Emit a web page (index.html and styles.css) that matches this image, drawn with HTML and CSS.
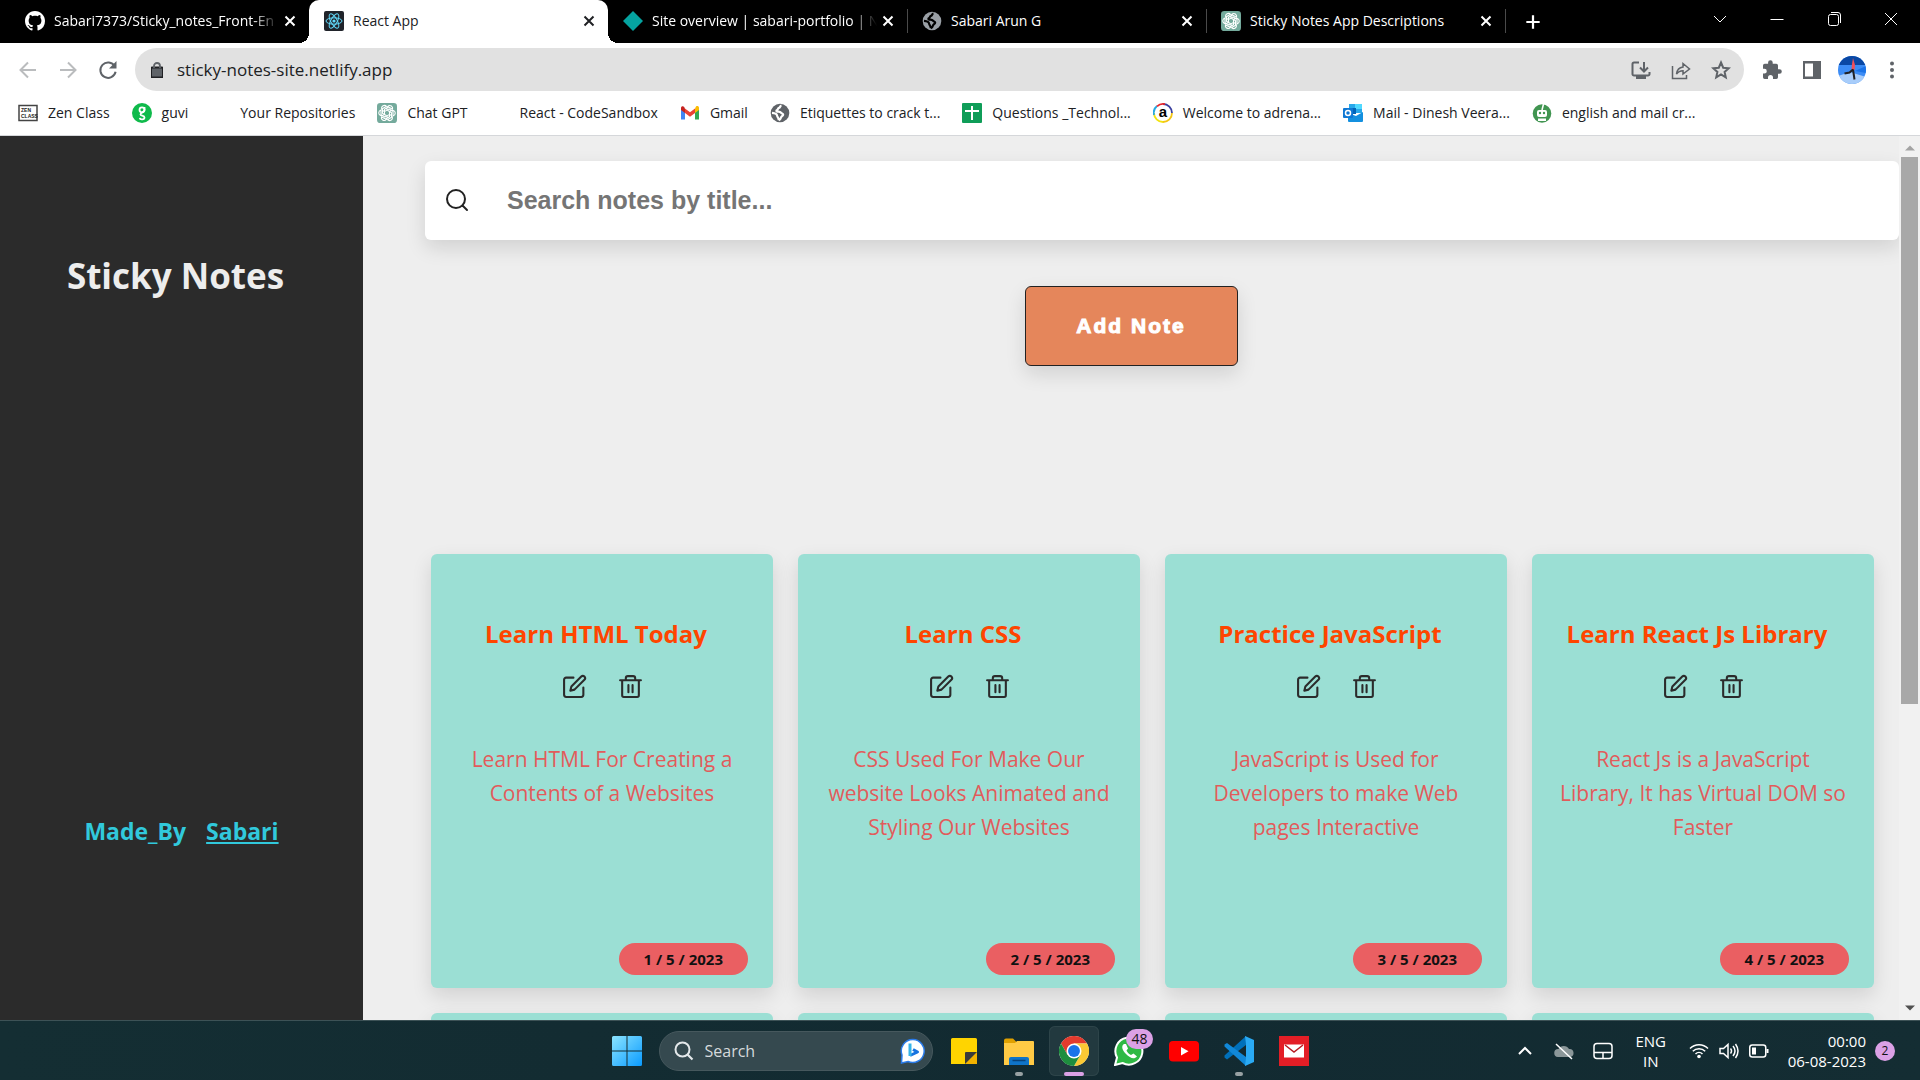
FILE: index.html
```html
<!DOCTYPE html>
<html lang="en">
<head>
<meta charset="utf-8">
<title>React App</title>
<link rel="stylesheet" href="styles.css">
</head>
<body>
<svg class="sprite" aria-hidden="true">
  <symbol id="close" viewBox="0 0 20 20"><path d="M5.500 5.500l9 9M14.500 5.500l-9 9" fill="none" stroke="currentColor" stroke-width="2"/></symbol>
  <symbol id="gpt" viewBox="0 0 24 24"><rect width="24" height="24" rx="4" fill="#74aa9c"/><g fill="none" stroke="#fff" stroke-width="1.300" stroke-linejoin="round"><g id="petal"><path d="M12 8.600V5.800a3.400 3.400 0 0 1 5.200-2.200c1.400.9 1.900 2.400 1.500 3.900l-5-2.800L9 7.400v5.900"/></g><use href="#petal" transform="rotate(60 12 12)"/><use href="#petal" transform="rotate(120 12 12)"/><use href="#petal" transform="rotate(180 12 12)"/><use href="#petal" transform="rotate(240 12 12)"/><use href="#petal" transform="rotate(300 12 12)"/></g></symbol>
  <symbol id="globe" viewBox="0 0 20 20"><circle cx="10" cy="10" r="9.300" fill="currentColor"/><path d="M11.500 2.600c-1.800.2-1 1.900-2.500 2.200-1.300.4-.7 1.700-1.900 2.100-1 .4-1 1.700.2 1.800 1.900 0 2.900-.3 3.700 1 .6 1 2.300.5 2.200 2-.2 1.500-1.900 1.500-2.300 3-.3 1.200-1 2.200-2.100 2.500M2 9.800c2.300.2 4.900.7 5 2.700.1 1.300 1.500 1.500 1.800 4.700" fill="none" stroke="var(--land)" stroke-width="2.200"/></symbol>
  <symbol id="edit" viewBox="0 0 24 24"><path d="M11 3.500H4a2 2 0 0 0-2 2V20a2 2 0 0 0 2 2h14.500a2 2 0 0 0 2-2v-7M18.500 2.500a2.100 2.100 0 0 1 3 3L12 15l-4 1 1-4z" fill="none" stroke="currentColor" stroke-width="2" stroke-linecap="round" stroke-linejoin="round"/></symbol>
  <symbol id="trash" viewBox="0 0 24 24"><path d="M2 6h20M4 6v14.500A1.500 1.500 0 0 0 5.500 22h13a1.500 1.500 0 0 0 1.500-1.500V6M7.500 6V4A2 2 0 0 1 9.500 2h5a2 2 0 0 1 2 2v2M10 10.500v7M14 10.500v7" fill="none" stroke="currentColor" stroke-width="2" stroke-linecap="round" stroke-linejoin="round"/></symbol>
</svg>

<header class="browser">
  <div class="tabstrip">
    <div class="tab">
      <svg class="fav" viewBox="0 0 16 16"><path fill="#fff" d="M8 0C3.580 0 0 3.580 0 8c0 3.540 2.290 6.530 5.470 7.590.4.070.55-.17.55-.38 0-.19-.01-.82-.01-1.490-2.010.37-2.530-.49-2.690-.94-.09-.23-.48-.94-.82-1.130-.28-.15-.68-.52-.01-.53.63-.01 1.080.58 1.230.82.720 1.210 1.870.87 2.330.66.070-.52.28-.87.51-1.070-1.780-.2-3.640-.89-3.640-3.950 0-.87.31-1.590.82-2.150-.08-.2-.36-1.020.08-2.120 0 0 .67-.21 2.200.82.640-.18 1.320-.27 2-.27s1.360.09 2 .27c1.530-1.040 2.200-.82 2.200-.82.44 1.100.16 1.920.08 2.120.51.560.82 1.270.82 2.150 0 3.070-1.870 3.750-3.650 3.950.29.25.54.73.54 1.480 0 1.070-.01 1.930-.01 2.200 0 .21.150.46.550.38A8.010 8.010 0 0 0 16 8c0-4.420-3.580-8-8-8z"/></svg>
      <span class="tab-title fade">Sabari7373/Sticky_notes_Front-En</span>
      <button class="tab-close" aria-label="Close tab"><svg><use href="#close"/></svg></button>
    </div>
    <div class="tab active">
      <svg class="fav" viewBox="0 0 20 20"><rect width="20" height="20" rx="2" fill="#20232a"/><g fill="none" stroke="#61dafb" stroke-width="1"><ellipse cx="10" cy="10" rx="8" ry="3.200"/><ellipse cx="10" cy="10" rx="8" ry="3.200" transform="rotate(60 10 10)"/><ellipse cx="10" cy="10" rx="8" ry="3.200" transform="rotate(120 10 10)"/></g><circle cx="10" cy="10" r="1.600" fill="#61dafb"/></svg>
      <span class="tab-title">React App</span>
      <button class="tab-close" aria-label="Close tab"><svg><use href="#close"/></svg></button>
    </div>
    <div class="tab">
      <svg class="fav" viewBox="0 0 20 20"><path d="M10 0l10 10-10 10L0 10z" fill="#05a3a0"/></svg>
      <span class="tab-title fade">Site overview | sabari-portfolio | N</span>
      <button class="tab-close" aria-label="Close tab"><svg><use href="#close"/></svg></button>
    </div>
    <div class="tab ruled">
      <svg class="fav globe-dark"><use href="#globe"/></svg>
      <span class="tab-title">Sabari Arun G</span>
      <button class="tab-close" aria-label="Close tab"><svg><use href="#close"/></svg></button>
    </div>
    <div class="tab ruled">
      <svg class="fav"><use href="#gpt"/></svg>
      <span class="tab-title">Sticky Notes App Descriptions</span>
      <button class="tab-close" aria-label="Close tab"><svg><use href="#close"/></svg></button>
    </div>
    <button class="new-tab" aria-label="New tab"><svg viewBox="0 0 18 18"><path d="M9 1.500v15M1.500 9h15" stroke="#fff" stroke-width="2.500"/></svg></button>
    <div class="window-controls">
      <button aria-label="Search tabs"><svg viewBox="0 0 16 16"><path d="M2 5l6 6 6-6"/></svg></button>
      <button aria-label="Minimize"><svg viewBox="0 0 16 16"><path d="M1.500 8.500h13"/></svg></button>
      <button aria-label="Restore"><svg viewBox="0 0 16 16"><rect x="2.500" y="3.500" width="10" height="11" rx="2"/><path d="M5 1.500h7a2.500 2.500 0 0 1 2.500 2.500v8"/></svg></button>
      <button aria-label="Close"><svg viewBox="0 0 16 16"><path d="M2 2l12 12M14 2L2 14"/></svg></button>
    </div>
  </div>

  <div class="toolbar">
    <button class="nav-btn dim" aria-label="Back"><svg viewBox="0 0 20 20"><path d="M18 10H3M10 2.500L2.500 10l7.500 7.500"/></svg></button>
    <button class="nav-btn dim" aria-label="Forward"><svg viewBox="0 0 20 20"><path d="M2 10h15M10 2.500l7.500 7.500-7.500 7.500"/></svg></button>
    <button class="nav-btn" aria-label="Reload"><svg viewBox="0 0 20 20"><path d="M16.700 6.200A7.700 7.700 0 1 0 17.600 11.800"/><path d="M18.500 1v7.500H11z" fill="currentColor" stroke="none"/></svg></button>
    <div class="omnibox">
      <svg class="lock" viewBox="0 0 12 16"><rect x="0" y="5.500" width="12" height="10" rx="1.500" fill="#5f6368"/><path d="M3 6V4a3 3 0 0 1 6 0v2" fill="none" stroke="#5f6368" stroke-width="1.800"/></svg>
      <input class="url" type="text" value="sticky-notes-site.netlify.app" aria-label="Address">
      <button aria-label="Install app"><svg viewBox="0 0 20 20"><path d="M8 2.500H3A1.500 1.500 0 0 0 1.500 4v10A1.500 1.500 0 0 0 3 15.500h14a1.500 1.500 0 0 0 1.500-1.500v-2M13 2v9M9 7.500l4 4 4-4"/><path d="M5 15h10v4H5z" fill="currentColor" stroke="none"/></svg></button>
      <button aria-label="Share"><svg viewBox="0 0 20 20"><path d="M1.500 6v12.500h14V15M5.500 14c.5-4.500 3-6.500 6.500-7V3.500l6.500 5.500-6.500 5v-3.300c-2.800 0-4.800.8-6.500 3.300z" stroke-width="1.500"/></svg></button>
      <button aria-label="Bookmark this tab"><svg viewBox="0 0 20 20"><path d="M10 2.500l2.200 5.200 5.600.5-4.200 3.700 1.200 5.500-4.800-2.900-4.800 2.900 1.200-5.500-4.200-3.700 5.600-.5z"/></svg></button>
    </div>
    <div class="extensions">
      <button aria-label="Extensions"><svg viewBox="0 0 20 20"><path d="M17.500 9.200H16V5.500a1.700 1.700 0 0 0-1.700-1.700h-3.600V2.500a2.300 2.300 0 0 0-4.600 0v1.300H2.700A1.700 1.700 0 0 0 1 5.500v3.300h1.400a2.400 2.400 0 0 1 0 4.800H1v3.700A1.700 1.700 0 0 0 2.700 19H6v-1.400a2.500 2.500 0 0 1 5 0V19h3.300a1.700 1.700 0 0 0 1.700-1.700v-3.500h1.500a2.300 2.300 0 0 0 0-4.600z" fill="#5f6368" stroke="none"/></svg></button>
      <button aria-label="Side panel"><svg viewBox="0 0 20 20"><path d="M1 1h18v18H1zM3 3.500v13h8v-13z" fill="#5f6368" fill-rule="evenodd" stroke="none"/></svg></button>
      <button aria-label="Profile"><svg class="avatar" viewBox="0 0 28 28"><clipPath id="round"><circle cx="14" cy="14" r="14"/></clipPath><g clip-path="url(#round)" stroke="none"><path d="M0 0h28v28H0z" fill="#3c8cf5"/><path d="M0 0h28v9H0z" fill="#0a48a4"/><path d="M0 20l12-4 16 5v10H0z" fill="#a8cdfa"/><path d="M17 15l11-5v7z" fill="#1a73e8"/><path d="M15 2l2 7-.5 5h-3l.5-6z" fill="#f0505a"/></g><path d="M15 13.500l1.500 10M15 13.500l-3.500 3-5 1" stroke="#202124" stroke-width="2"/></svg></button>
      <button aria-label="Menu"><svg viewBox="0 0 20 20"><g fill="#5f6368" stroke="none"><circle cx="10" cy="3.500" r="2"/><circle cx="10" cy="10" r="2"/><circle cx="10" cy="16.500" r="2"/></g></svg></button>
    </div>
  </div>

  <nav class="bookmarks">
    <a href="#"><svg viewBox="0 0 20 20"><rect x="1" y="2.500" width="18" height="15" fill="#fff" stroke="#444" stroke-width="1.500"/><text x="3" y="9" class="zen">ZEN</text><text x="3" y="15" class="zen">CLASS</text></svg>Zen Class</a>
    <a href="#"><svg viewBox="0 0 20 20"><circle cx="10" cy="10" r="10" fill="#0fba4b"/><g fill="none" stroke="#fff" stroke-width="1.800"><circle cx="10" cy="6.800" r="2.500"/><path d="M12.500 4v3c0 2-4 2.500-4 4.500 0 1.500 4 .8 4 3s-4.500 2.500-4.800.3"/></g></svg>guvi</a>
    <a href="#"><svg></svg>Your Repositories</a>
    <a href="#"><svg><use href="#gpt"/></svg>Chat GPT</a>
    <a href="#"><svg></svg>React - CodeSandbox</a>
    <a href="#"><svg viewBox="0 0 20 20"><path d="M1 5v11.500h4V9z" fill="#4285f4"/><path d="M15 9v7.500h4V5z" fill="#34a853"/><path d="M15 5.500V10l4-3V5c0-2-2-2.300-3-1.500z" fill="#fbbc04"/><path d="M5 5.500l5 3.800 5-3.800V10l-5 3.800L5 10z" fill="#ea4335"/><path d="M1 5v2l4 3V5.500L4 3.700C3 2.700 1 3 1 5z" fill="#c5221f"/></svg>Gmail</a>
    <a href="#"><svg class="globe-light"><use href="#globe"/></svg>Etiquettes to crack t...</a>
    <a href="#"><svg viewBox="0 0 20 20"><rect width="20" height="20" rx="1" fill="#0f9d58"/><path d="M10 3v14M3 8h14" stroke="#fff" stroke-width="2"/></svg>Questions _Technol...</a>
    <a href="#"><svg viewBox="0 0 20 20"><g fill="none" stroke-width="1.800"><path d="M10 1a9 9 0 0 1 9 9" stroke="#3a3f9e"/><path d="M19 10a9 9 0 0 1-9 9" stroke="#f3c514"/><path d="M10 19a9 9 0 0 1-9-9" stroke="#f2e30c"/><path d="M1 12a9 9 0 0 1 3-9" stroke="#27a8e0"/><path d="M4 3.400A9 9 0 0 1 12 1.200" stroke="#e6262b"/></g><text x="10" y="14" class="brand-a">a</text></svg>Welcome to adrena...</a>
    <a href="#"><svg viewBox="0 0 20 20"><path d="M6 1h13v9H6z" fill="#28a8ea"/><path d="M12 1h7v5h-7z" fill="#50d9ff"/><path d="M6 5h7v6H6z" fill="#0364b8"/><path d="M5 10l8 3 7-4v9a1 1 0 0 1-1 1H6a1 1 0 0 1-1-1z" fill="#1490df"/><rect y="5" width="10" height="10" rx="1" fill="#0f78d4"/><circle cx="5" cy="10" r="2.500" fill="none" stroke="#fff" stroke-width="1.500"/></svg>Mail - Dinesh Veera...</a>
    <a href="#"><svg viewBox="0 0 20 20"><circle cx="10" cy="10.500" r="9.300" fill="#419551"/><path d="M10 7l1.500-6" stroke="#fff" stroke-width="1.500"/><rect x="5" y="7" width="10" height="7" rx="2" fill="#fff"/><circle cx="8" cy="10" r="1.200" fill="#419551"/><circle cx="12" cy="10" r="1.200" fill="#419551"/><path d="M6 15.500h8v2.500H6z" fill="#fff"/></svg>english and mail cr...</a>
  </nav>
</header>

<div class="page">
  <aside class="sidebar">
    <h1>Sticky Notes</h1>
    <p class="credit"><span>Made_By</span><a href="#">Sabari</a></p>
  </aside>
  <main>
    <div class="search">
      <svg viewBox="0 0 24 24"><circle cx="11" cy="10" r="9"/><path d="M17.500 16.500L22 21"/></svg>
      <input type="search" placeholder="Search notes by title..." aria-label="Search notes by title">
    </div>
    <button class="add-note">Add Note</button>
    <section class="notes">
      <article class="note">
        <h2>Learn HTML Today</h2>
        <div class="actions"><button aria-label="Edit"><svg><use href="#edit"/></svg></button><button aria-label="Delete"><svg><use href="#trash"/></svg></button></div>
        <p>Learn HTML For Creating a Contents of a Websites</p>
        <time>1 / 5 / 2023</time>
      </article>
      <article class="note">
        <h2>Learn CSS</h2>
        <div class="actions"><button aria-label="Edit"><svg><use href="#edit"/></svg></button><button aria-label="Delete"><svg><use href="#trash"/></svg></button></div>
        <p>CSS Used For Make Our website Looks Animated and Styling Our Websites</p>
        <time>2 / 5 / 2023</time>
      </article>
      <article class="note">
        <h2>Practice JavaScript</h2>
        <div class="actions"><button aria-label="Edit"><svg><use href="#edit"/></svg></button><button aria-label="Delete"><svg><use href="#trash"/></svg></button></div>
        <p>JavaScript is Used for Developers to make Web pages Interactive</p>
        <time>3 / 5 / 2023</time>
      </article>
      <article class="note">
        <h2>Learn React Js Library</h2>
        <div class="actions"><button aria-label="Edit"><svg><use href="#edit"/></svg></button><button aria-label="Delete"><svg><use href="#trash"/></svg></button></div>
        <p>React Js is a JavaScript Library, It has Virtual DOM so Faster</p>
        <time>4 / 5 / 2023</time>
      </article>
      <article class="note"></article>
      <article class="note"></article>
      <article class="note"></article>
      <article class="note"></article>
    </section>
  </main>
  <div class="scrollbar">
    <svg class="spent" viewBox="0 0 10 6"><path d="M0 5.500L5 .5l5 5z"/></svg>
    <div class="track"><div class="thumb"></div></div>
    <svg viewBox="0 0 10 6"><path d="M0 .5l5 5 5-5z"/></svg>
  </div>
</div>

<footer class="taskbar">
  <div class="apps">
    <button class="app" aria-label="Start"><svg viewBox="0 0 30 30"><linearGradient id="win" x1="0" y1="0" x2="1" y2="1"><stop offset="0" stop-color="#8be4ff"/><stop offset="1" stop-color="#0a9bff"/></linearGradient><path d="M0 1.500A1.500 1.500 0 0 1 1.500 0h13v14.500H0zM15.500 0h13A1.500 1.500 0 0 1 30 1.500v13H15.500zM0 15.500h14.500V30h-13A1.500 1.500 0 0 1 0 28.500zM15.500 15.500H30v13a1.500 1.500 0 0 1-1.500 1.500h-13z" fill="url(#win)"/></svg></button>
    <label class="task-search">
      <svg viewBox="0 0 20 20"><circle cx="8.500" cy="8.500" r="7" fill="none" stroke="#e4e8ea" stroke-width="2"/><path d="M13.500 13.500l5 5" stroke="#e4e8ea" stroke-width="2.200"/></svg>
      <input type="text" placeholder="Search">
      <svg class="bing" viewBox="0 0 26 26"><path d="M13 1.500A11.500 11.500 0 1 1 8 23.500L1.500 25 2 17A11.500 11.500 0 0 1 13 1.500z" fill="#fff" stroke="#2a7bea" stroke-width="1.500"/><path d="M10 17.500l7.500-3.500-4.500-2.500" fill="none" stroke="#1673e0" stroke-width="3" stroke-linejoin="round"/><path d="M10 5.500v12.500" stroke="#35b3e8" stroke-width="3"/></svg>
    </label>
    <button class="app" aria-label="Sticky Notes"><svg viewBox="0 0 30 30"><path d="M2 3.500A1.500 1.500 0 0 1 3.500 2h23A1.500 1.500 0 0 1 28 3.500V28H2z" fill="#ffd400"/><path d="M28 16L16 28h12z" fill="#f2b200"/><path d="M28 16H17a1 1 0 0 0-1 1v11z" fill="#3a3a3a"/></svg></button>
    <button class="app open" aria-label="File Explorer"><svg viewBox="0 0 30 30"><path d="M0 4.500A2 2 0 0 1 2 2.500h7L12 5.500v5H0z" fill="#e0a000"/><path d="M0 7h11l2-2h16a1 1 0 0 1 1 1v23H0z" fill="#ffca45"/><path d="M5 29v-6a2 2 0 0 1 2-2h16a2 2 0 0 1 2 2v6z" fill="#0f74c8"/><path d="M8.500 24.500h13" stroke="#07427a" stroke-width="1.500"/></svg></button>
    <button class="app open current" aria-label="Chrome"><svg viewBox="0 0 48 48"><circle cx="24" cy="24" r="24" fill="#fff"/><path d="M24 12h20.800A24 24 0 0 0 3.200 12l10.400 18z" fill="#e33b2e"/><path d="M34.400 30L24 48A24 24 0 0 0 44.800 12H24z" fill="#fcc934"/><path d="M13.600 30L3.200 12A24 24 0 0 0 24 48l10.400-18z" fill="#1e8e3e"/><circle cx="24" cy="24" r="12" fill="#fff"/><circle cx="24" cy="24" r="9.500" fill="#1a73e8"/></svg></button>
    <button class="app" aria-label="WhatsApp, 48 unread"><svg viewBox="0 0 30 30"><path d="M1 29l2-7.500A13.500 13.500 0 1 1 8.500 27z" fill="#2fb944" stroke="#fff" stroke-width="2"/><path d="M10 8c-3 2-2 6 2 10s8 6 11 2.500l-3.500-3-2.500 1.500c-2-1-3.500-2.500-4.500-4.500L14 12.500 12 8z" fill="#fff"/></svg><span class="count">48</span></button>
    <button class="app" aria-label="YouTube"><svg viewBox="0 0 30 30"><rect y="5" width="30" height="20.500" rx="4" fill="#f00"/><path d="M12 11l7.500 4.300L12 19.500z" fill="#fff"/></svg></button>
    <button class="app open" aria-label="Visual Studio Code"><svg viewBox="0 0 30 30"><path d="M22 0L.5 19.500v2L3 23.500 22 9z" fill="#0070ba"/><path d="M22 30L.5 10.500v-2L3 7l19 14z" fill="#1188d8"/><path d="M21 0l1 8v14l-1 8 9-4V4z" fill="#2aaaf4"/></svg></button>
    <button class="app" aria-label="Mail notifier"><svg viewBox="0 0 30 30"><path d="M0 0h30v30H0z" fill="#e31e26"/><rect x="5" y="8.500" width="20" height="13" fill="#fff"/><path d="M6 9l9 7 9-7" fill="none" stroke="#b71c22" stroke-width="1.500"/></svg></button>
  </div>
  <div class="tray">
    <button aria-label="Hidden icons"><svg viewBox="0 0 20 20"><path d="M4 13l6-6 6 6" stroke-width="2"/></svg></button>
    <svg viewBox="0 0 20 20"><path d="M4 16a4 4 0 0 1 .5-8A6 6 0 0 1 15 8a4 4 0 0 1 1 8z" fill="#8b9799" stroke="none"/><path d="M2 3l16 15" stroke-width="1.500"/></svg>
    <svg viewBox="0 0 20 20"><rect x="1" y="2.500" width="18" height="15" rx="3"/><path d="M1 11.500h18M10 11.500v6"/></svg>
    <div class="lang">ENG<br>IN</div>
    <div class="status">
      <svg viewBox="0 0 20 20"><circle cx="10" cy="15.500" r="1.800" fill="#fff" stroke="none"/><path d="M1 7.500a12.500 12.500 0 0 1 18 0M3.800 10.300a8.600 8.600 0 0 1 12.400 0M6.500 13a5 5 0 0 1 7 0"/></svg>
      <svg viewBox="0 0 20 20"><path d="M1 7.500h3.500L9 3.500v13l-4.500-4H1zM11.500 7.500q2 2.500 0 5M14 5q4 5 0 10M16.500 3q5 7 0 14"/></svg>
      <svg viewBox="0 0 20 20"><rect x="0.750" y="4" width="16" height="12" rx="2.500"/><path d="M3 6.500h4v7H3zM17.500 8h2v4h-2z" fill="#fff" stroke="none"/></svg>
    </div>
    <div class="clock">00:00<br>06-08-2023</div>
    <span class="alerts">2</span>
  </div>
</footer>
</body>
</html>
```
FILE: styles.css
```css
* { box-sizing: border-box; }

body {
  margin: 0;
  height: 100vh;
  display: flex;
  flex-direction: column;
  overflow: hidden;
  font-family: "Open Sans", "Noto Sans", sans-serif;
  font-size: 14px;
  color: #202124;
}

button {
  display: flex;
  align-items: center;
  justify-content: center;
  padding: 0;
  border: 0;
  background: none;
  font: inherit;
  color: inherit;
}

input {
  min-width: 0;
  padding: 0;
  border: 0;
  outline: 0;
  background: none;
  font: inherit;
  color: inherit;
}

svg { flex: none; width: 20px; height: 20px; }
.sprite { position: absolute; width: 0; height: 0; }

/* Browser chrome */
.tabstrip {
  display: flex;
  height: 43px;
  padding: 0 1px 0 10px;
  background: #000;
  color: #fff;
}

.tab {
  display: flex;
  flex: 0 1 299px;
  align-items: center;
  gap: 9px;
  min-width: 0;
  padding: 0 9px 2px 15px;
}

.tab.active {
  position: relative;
  background: #fff;
  color: #202124;
  border-radius: 10px 10px 0 0;
}

.tab.active::before,
.tab.active::after {
  content: "";
  position: absolute;
  bottom: 0;
  width: 10px;
  height: 10px;
}

.tab.active::before { right: 100%; background: radial-gradient(circle at 0 0, #000 10px, #fff 10px); }
.tab.active::after { left: 100%; background: radial-gradient(circle at 100% 0, #000 10px, #fff 10px); }

.tab.ruled,
.new-tab {
  background: linear-gradient(#4a4a4a, #4a4a4a) 0 9px / 1px 24px no-repeat;
}

.tab-title {
  flex: 1;
  overflow: hidden;
  white-space: nowrap;
}

.tab-title.fade {
  margin-right: -8px;
  mask-image: linear-gradient(90deg, #000 88%, transparent);
}

.tab-close { width: 20px; height: 20px; }
.globe-dark { color: #9aa0a6; --land: #000; }
.globe-light { color: #5f6368; --land: #fff; }

.new-tab { width: 55px; }
.new-tab svg { width: 16px; height: 16px; }

.window-controls { display: flex; margin-left: auto; }
.window-controls button { width: 57px; height: 38px; }
.window-controls svg { width: 16px; height: 16px; fill: none; stroke: #fff; stroke-width: 1; }

.toolbar {
  display: flex;
  align-items: center;
  height: 53px;
  padding: 0 8px;
  background: #fff;
}

.nav-btn { width: 40px; height: 40px; color: #5f6368; }
.nav-btn.dim { color: #babcbe; }
.nav-btn svg { fill: none; stroke: currentColor; stroke-width: 2; }

.omnibox {
  display: flex;
  flex: 1;
  align-items: center;
  height: 43px;
  margin-left: 7px;
  padding: 0 3px 0 16px;
  border-radius: 22px;
  background: #e1e1e1;
}

.omnibox .lock { width: 12px; height: 16px; }
.url { flex: 1; margin-left: 14px; font-size: 17px; }
.omnibox button { width: 40px; height: 40px; color: #5f6368; }
.omnibox svg,
.extensions svg { fill: none; stroke: currentColor; stroke-width: 2; }

.extensions { display: flex; margin-left: 8px; }
.extensions button { width: 40px; height: 40px; }
.extensions .avatar { width: 28px; height: 28px; }

.bookmarks {
  display: flex;
  align-items: center;
  gap: 22px;
  height: 40px;
  padding: 0 18px 6px;
  border-bottom: 1px solid #d5d7da;
  background: #fff;
  white-space: nowrap;
}

.bookmarks a {
  display: flex;
  align-items: center;
  gap: 10px;
  color: #202124;
  text-decoration: none;
}

.zen { font: bold 5px "Liberation Sans", sans-serif; fill: #222; }
.brand-a { font: bold 15px "Liberation Sans", sans-serif; text-anchor: middle; fill: #000; }

/* Notes app */
.page {
  display: flex;
  flex: 1;
  min-height: 0;
  background: #eee;
}

.sidebar {
  display: flex;
  flex: 0 0 363px;
  flex-direction: column;
  align-items: center;
  justify-content: space-between;
  padding: 112px 12px 170px 0;
  background: #2b2b2b;
}

.sidebar h1 {
  margin: 0;
  font-size: 35px;
  line-height: 56px;
  color: #ededed;
}

.credit {
  display: flex;
  gap: 20px;
  margin: 0;
  padding-left: 12px;
  font-size: 23px;
  font-weight: 700;
  line-height: 38px;
  color: #31c9dc;
}

.credit a { color: inherit; }

main {
  flex: 1;
  min-width: 0;
  overflow: hidden;
}

.search {
  display: flex;
  align-items: center;
  gap: 38px;
  height: 79px;
  margin: 25px 0 0 62px;
  padding: 0 20px;
  border-radius: 6px;
  background: #fff;
  box-shadow: 0 8px 20px rgba(0, 0, 0, .12);
}

.search svg {
  width: 24px;
  height: 24px;
  fill: none;
  stroke: #222;
  stroke-width: 2;
  stroke-linecap: round;
}

.search input {
  flex: 1;
  font: bold 25px "Liberation Sans", Arial, sans-serif;
}

.search input::placeholder { color: #757575; opacity: 1; }

.add-note {
  width: 213px;
  height: 80px;
  margin: 46px auto 188px;
  border: 1px solid #222;
  border-radius: 6px;
  background: #e5865b;
  box-shadow: 0 8px 20px rgba(0, 0, 0, .12);
  font: 900 21px "Arial Black", "Liberation Sans", Arial, sans-serif;
  letter-spacing: 2px;
  color: #fff;
  -webkit-text-stroke: 1px #fff;
}

.notes {
  display: grid;
  grid-template-columns: repeat(4, 1fr);
  grid-auto-rows: 434px;
  gap: 25px;
  padding: 0 25px 0 68px;
}

.note {
  display: flex;
  flex-direction: column;
  align-items: center;
  padding: 62px 25px 13px;
  border-radius: 6px;
  background: #9bdfd4;
  box-shadow: 0 8px 20px rgba(0, 0, 0, .12);
}

.note h2 {
  margin: 0;
  padding-right: 12px;
  font-size: 24px;
  font-weight: 700;
  line-height: 36px;
  white-space: nowrap;
  color: #ff4500;
}

.actions {
  display: flex;
  gap: 31px;
  margin-top: 22px;
  color: #2b2b2b;
}

.actions svg { width: 25px; height: 25px; }

.note p {
  margin: 43px 0 0;
  padding: 0 2px;
  font-size: 21px;
  line-height: 34px;
  text-align: center;
  color: #e25b5b;
}

.note time {
  align-self: flex-end;
  margin-top: auto;
  padding: 0 25px;
  border-radius: 16px;
  background: #ea5f62;
  font-size: 15px;
  font-weight: 700;
  line-height: 32px;
  color: #111;
}

.scrollbar {
  display: flex;
  flex: 0 0 21px;
  flex-direction: column;
  align-items: center;
  padding: 9px 0;
  background: #f1f1f1;
}

.scrollbar svg { width: 10px; height: 6px; fill: #505050; }
.scrollbar .spent { fill: #a3a3a3; }
.track { flex: 1; width: 17px; padding: 6px 0; }
.thumb { height: 65%; background: #a8a8a8; }

/* Taskbar */
.taskbar {
  display: grid;
  grid-template-columns: 1fr auto 1fr;
  align-items: center;
  height: 60px;
  border-top: 1px solid #3d5256;
  background: linear-gradient(90deg, #142e33, #122a31 60%, #142d33);
  color: #fff;
}

.apps {
  display: flex;
  grid-column: 2;
  align-items: center;
  gap: 5px;
}

.app {
  position: relative;
  width: 50px;
  height: 50px;
  border-radius: 6px;
}

.app svg { width: 30px; height: 30px; }
.app.current { background: #22393f; box-shadow: inset 0 0 0 1px #2d4449; }

.app.open::after {
  content: "";
  position: absolute;
  bottom: 0;
  left: 21px;
  width: 8px;
  height: 4px;
  border-radius: 2px;
  background: #98a1a3;
}

.app.current::after { left: 15px; width: 20px; background: #dba1e6; }

.count {
  position: absolute;
  top: 3px;
  right: 1px;
  padding: 0 5px;
  border-radius: 10px;
  background: #dba1e6;
  line-height: 20px;
  color: #111;
}

.task-search {
  display: flex;
  align-items: center;
  width: 274px;
  height: 40px;
  margin: 0 1px 0 2px;
  padding: 0 6px 0 14px;
  border: 1px solid #46585d;
  border-radius: 20px;
  background: #35494f;
}

.task-search input { flex: 1; margin-left: 11px; font-size: 16px; }
.task-search input::placeholder { color: #d5dadc; opacity: 1; }
.task-search .bing { width: 26px; height: 26px; }

.tray {
  display: flex;
  align-items: center;
  justify-content: flex-end;
  gap: 19px;
  padding-right: 25px;
  font-size: 15px;
  line-height: 20px;
}

.tray svg { fill: none; stroke: #fff; stroke-width: 1.5; }
.lang { width: 38px; text-align: center; }
.status { display: flex; gap: 10px; }
.clock { text-align: right; }

.alerts {
  width: 20px;
  margin-left: -10px;
  border-radius: 50%;
  background: #dba1e6;
  font-size: 12px;
  text-align: center;
  color: #111;
}
```
